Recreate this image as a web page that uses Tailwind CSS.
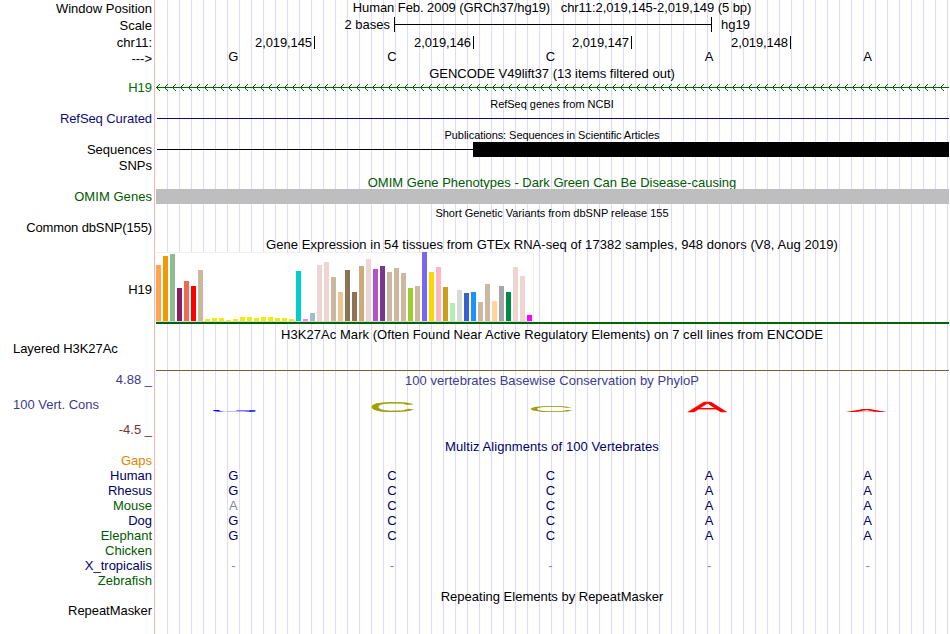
<!DOCTYPE html>
<html lang="en">
<head>
    <meta charset="UTF-8">
    <meta name="viewport" content="width=device-width, initial-scale=1.0">
    <title>chr11:2,019,145-2,019,149 - Genome Browser</title>
    <script src="https://cdn.jsdelivr.net/npm/@tailwindcss/browser@4"></script>
</head>
<body class="bg-white text-black w-[950px] h-[634px] overflow-hidden font-['Liberation_Sans',Arial,sans-serif] text-[13px] leading-[15px]">
    <div class="flex h-[634px] whitespace-pre">
        <!-- Track labels -->
        <div class="w-[155px] shrink-0 border-r border-[#ffb4b4] flex flex-col pr-[2px] text-right">
            <div class="mt-[1px]">Window Position</div>
            <div class="mt-[2px]">Scale</div>
            <div class="mt-[2px]">chr11:</div>
            <div class="mt-[1px]">---&gt;</div>
            <div class="mt-[14px] text-[#006e00]">H19</div>
            <div class="mt-[16px] text-[#0c0c78] tracking-[-0.08px]">RefSeq Curated</div>
            <div class="mt-[16px]">Sequences</div>
            <div class="mt-[1px]">SNPs</div>
            <div class="mt-[16px] text-[#005a00] tracking-[0.05px]">OMIM Genes</div>
            <div class="mt-[16px] tracking-[-0.12px]">Common dbSNP(155)</div>
            <div class="mt-[47px]">H19</div>
            <div class="mt-[44px] pl-[13px] text-left tracking-[-0.05px]">Layered H3K27Ac</div>
            <div class="mt-[16px] text-[#3c3c8c]">4.88 _</div>
            <div class="mt-[10px] pl-[13px] text-left text-[#3c3c8c]">100 Vert. Cons</div>
            <div class="mt-[10px] text-[#783232]">-4.5 _</div>
            <div class="mt-[16px] text-[#e68200]">Gaps</div>
            <div class="text-[#000064]">Human</div>
            <div class="text-[#000064]">Rhesus</div>
            <div class="text-[#005a00]">Mouse</div>
            <div class="text-[#000064]">Dog</div>
            <div class="text-[#005a00]">Elephant</div>
            <div class="text-[#005a00]">Chicken</div>
            <div class="text-[#000064]">X_tropicalis</div>
            <div class="text-[#005a00]">Zebrafish</div>
            <div class="mt-[15px] tracking-[-0.05px]">RepeatMasker</div>
        </div>

        <!-- Track images, guidelines every 12px -->
        <div class="w-[794px] flex flex-col bg-[repeating-linear-gradient(to_right,#fff_0_11px,#dcdcfa_11px_12px)] bg-[position:1px_0] bg-no-repeat">
            <div class="h-[15px] text-center tracking-[-0.07px]">Human Feb. 2009 (GRCh37/hg19)   chr11:2,019,145-2,019,149 (5 bp)</div>
            <div class="h-[19px] flex items-center">
                <div class="w-[235px] text-right">2 bases</div>
                <div class="ml-[4px] w-[318px] h-[15px] border-x border-black flex items-center"><div class="h-px w-full bg-black"></div></div>
                <div class="ml-[9px]">hg19</div>
            </div>
            <div class="h-[15px] flex items-end tracking-[-0.1px] leading-[13px]">
                <div class="w-[160px] h-[13px] border-r border-black pr-[2px] text-right">2,019,145</div>
                <div class="w-[159px] h-[13px] border-r border-black pr-[2px] text-right">2,019,146</div>
                <div class="w-[158px] h-[13px] border-r border-black pr-[2px] text-right">2,019,147</div>
                <div class="w-[159px] h-[13px] border-r border-black pr-[2px] text-right">2,019,148</div>
            </div>
            <div class="grid grid-cols-5 w-[793px] -ml-[1px] h-[16px] text-center">
                <div>G</div><div>C</div><div>C</div><div>A</div><div>A</div>
            </div>

            <!-- GENCODE -->
            <div class="h-[18px] text-center leading-[17px]">GENCODE V49lift37 (13 items filtered out)</div>
            <svg class="ml-[1px] w-[793px] h-[13px] shrink-0" viewBox="0 0 793 13" fill="none" stroke="#006400" shape-rendering="crispEdges">
                <defs>
                    <pattern id="strand" x="0" width="8" height="13" patternUnits="userSpaceOnUse">
                        <path d="M3 1.5h1M2 2.5h1M1 3.5h1M0 4.5h1M1 5.5h1M2 6.5h1M3 7.5h1"/>
                    </pattern>
                </defs>
                <path d="M0 4.5h793"/>
                <rect width="790" height="13" fill="url(#strand)" stroke="none"/>
            </svg>

            <!-- RefSeq -->
            <div class="h-[15px] text-center text-[11px] leading-[17px] tracking-[-0.03px]">RefSeq genes from NCBI</div>
            <div class="ml-[2px] mt-[7px] h-px bg-[#0c0c78]"></div>

            <!-- Publications -->
            <div class="mt-[8px] h-[15px] text-center text-[11px] leading-[17px] tracking-[-0.06px]">Publications: Sequences in Scientific Articles</div>
            <div class="ml-[2px] h-[15px] flex items-center">
                <div class="w-[316px] h-px bg-black"></div>
                <div class="flex-1 h-[15px] bg-black"></div>
            </div>

            <!-- OMIM -->
            <div class="mt-[18px] h-[14px] text-center text-[#005a00]">OMIM Gene Phenotypes - Dark Green Can Be Disease-causing</div>
            <div class="ml-[1px] h-[15px] bg-[#bebebe] relative"></div>

            <!-- dbSNP -->
            <div class="mt-[1px] h-[15px] text-center text-[11px] leading-[17px]">Short Genetic Variants from dbSNP release 155</div>

            <!-- GTEx -->
            <div class="mt-[17px] h-[15px] text-center tracking-[0.05px]">Gene Expression in 54 tissues from GTEx RNA-seq of 17382 samples, 948 donors (V8, Aug 2019)</div>
            <div id="gtex" class="ml-[1px] w-[378px] h-[70px] bg-white border-t border-r border-[#f0f0f0] border-b border-b-[#d8d8d8] flex items-end gap-[2px]"></div>
            <div class="ml-[1px] h-[2px] bg-[#006400]"></div>

            <!-- H3K27Ac -->
            <div class="mt-[3px] h-[15px] text-center tracking-[0.05px]">H3K27Ac Mark (Often Found Near Active Regulatory Elements) on 7 cell lines from ENCODE</div>
            <div class="ml-[1px] mt-[28px] h-px bg-[#78603c]"></div>

            <!-- PhyloP logo -->
            <div class="mt-[2px] h-[15px] text-center text-[#3c3c8c] tracking-[0.04px]">100 vertebrates Basewise Conservation by PhyloP</div>
            <div class="mt-[13px] h-[11px] flex items-end">
                <svg class="ml-[58px] w-[43px] h-[2px]" viewBox="5 -70 66.5 71" preserveAspectRatio="none"><text font-size="100" fill="#0000ff">G</text></svg>
                <svg class="ml-[116px] w-[41px] h-[10px] overflow-visible" viewBox="5 -70 63 71" preserveAspectRatio="none"><text font-size="100" fill="#a0a000" stroke="#a0a000" stroke-width="1">C</text></svg>
                <svg class="ml-[118px] w-[41px] h-[6px] overflow-visible" viewBox="5 -70 63 71" preserveAspectRatio="none"><text font-size="100" fill="#a0a000">C</text></svg>
                <svg class="ml-[116px] w-[39px] h-[10px] overflow-visible" viewBox="0 -69 67 69" preserveAspectRatio="none"><text font-size="100" fill="#ff0000" stroke="#ff0000" stroke-width="2">A</text></svg>
                <svg class="ml-[119px] w-[41px] h-[2px] overflow-visible" viewBox="0 -69 67 69" preserveAspectRatio="none"><text font-size="100" fill="#ff0000">A</text></svg>
            </div>

            <!-- Multiz -->
            <div class="mt-[27px] h-[15px] text-center text-[#000064] tracking-[0.08px]">Multiz Alignments of 100 Vertebrates</div>
            <div class="mt-[14px] grid grid-cols-5 w-[793px] -ml-[1px] text-center text-[#000064]">
                <div>G</div><div>C</div><div>C</div><div>A</div><div>A</div>
                <div>G</div><div>C</div><div>C</div><div>A</div><div>A</div>
                <div class="text-[#8282b4]">A</div><div>C</div><div>C</div><div>A</div><div>A</div>
                <div>G</div><div>C</div><div>C</div><div>A</div><div>A</div>
                <div>G</div><div>C</div><div>C</div><div>A</div><div>A</div>
            </div>
            <div class="mt-[15px] grid grid-cols-5 w-[793px] -ml-[1px] text-center text-[#8282b4]">
                <div>-</div><div>-</div><div>-</div><div>-</div><div>-</div>
            </div>

            <!-- RepeatMasker -->
            <div class="mt-[16px] h-[15px] text-center">Repeating Elements by RepeatMasker</div>
        </div>
    </div>

    <script>
        // [height, color] per tissue
        const tissues = [
            [56, '#ffa54f'], [65, '#ee9a00'], [67, '#8fbc8f'], [33, '#8b1c62'], [40, '#ee6a50'], [35, '#ff0000'],
            [51, '#cdb79e'], [2, '#eeee00'], [3, '#eeee00'], [3, '#eeee00'], [1, '#eeee00'], [2, '#eeee00'],
            [4, '#eeee00'], [4, '#eeee00'], [3, '#eeee00'], [4, '#eeee00'], [4, '#eeee00'], [3, '#eeee00'],
            [3, '#eeee00'], [2, '#eeee00'], [50, '#00cdcd'], [2, '#ee82ee'], [8, '#9ac0cd'], [56, '#eed5d2'],
            [59, '#eed5d2'], [44, '#cdb79e'], [29, '#eec591'], [51, '#8b7355'], [29, '#8b7355'], [55, '#cdaa7d'],
            [62, '#eed5d2'], [52, '#b452cd'], [55, '#7a378b'], [49, '#cdb79e'], [53, '#cdb79e'], [48, '#cdb79e'],
            [33, '#9acd32'], [35, '#cdb79e'], [69, '#7a67ee'], [49, '#ffd700'], [54, '#ffb6c1'], [34, '#cd9b1d'],
            [18, '#b4eeb4'], [31, '#d9d9d9'], [28, '#3a5fcd'], [29, '#1e90ff'], [19, '#cdb79e'], [37, '#cdb79e'],
            [20, '#ffd39b'], [35, '#a6a6a6'], [29, '#008b45'], [54, '#eed5d2'], [45, '#eed5d2'], [6, '#ff00ff']
        ];
        document.getElementById('gtex').innerHTML = tissues.map(([h, color]) =>
            `<div class="w-[5px] shrink-0" style="height:${h}px;background:${color}"></div>`
        ).join('');
    </script>
</body>
</html>
